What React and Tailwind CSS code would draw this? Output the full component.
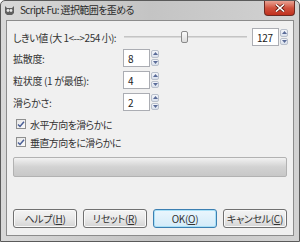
import React from 'react';

const jp = "font-['Noto_Sans_CJK_JP','Noto_Sans',sans-serif] [font-feature-settings:'palt'] tracking-[-0.3px]";

const SpinArrow = ({ up }) => (
  <div className="flex-1 flex items-center justify-center rounded-[2px] border border-[#b9c0cc] bg-gradient-to-b from-[#f4f6fa] to-[#d9e0ec]">
    <svg width="5" height="3" viewBox="0 0 5 3">
      {up ? <path d="M0 3 L2.5 0 L5 3 Z" fill="#5a6b98" /> : <path d="M0 0 L2.5 3 L5 0 Z" fill="#5a6b98" />}
    </svg>
  </div>
);

const Spin = ({ value }) => (
  <div className="flex h-[18px]">
    <div className="w-[27px] h-full border border-[#abadb3] bg-white pl-[4px] flex items-center text-[10px] text-[#222]">{value}</div>
    <div className="ml-[1px] w-[8px] flex flex-col gap-[1px] py-[1px]">
      <SpinArrow up />
      <SpinArrow />
    </div>
  </div>
);

const Check = ({ label }) => (
  <div className="h-[18px] flex items-center">
    <div className="ml-[3px] w-[10px] h-[10px] border border-[#8e8f8f] bg-gradient-to-br from-[#e6e6e6] to-[#fbfbfb] flex items-center justify-center">
      <svg width="8" height="7" viewBox="0 0 8 7">
        <path d="M1 3.5 L3 5.5 L7 0.8" stroke="#4a5f97" strokeWidth="1.5" fill="none" />
      </svg>
    </div>
    <span className="ml-[4px] text-[10px] text-[#333] tracking-[-0.6px]">{label}</span>
  </div>
);

const Btn = ({ text, mnem, def }) => (
  <div
    className={
      def
        ? 'w-[64px] h-[19px] rounded-[3px] border border-[#3c7fb1] bg-gradient-to-b from-[#eaf6fd] to-[#d3ebf9] flex items-center justify-center text-[10px] text-[#333] shadow-[inset_0_0_0_1px_#a8e0f7]'
        : 'w-[64px] h-[19px] rounded-[3px] border border-[#707070] bg-gradient-to-b from-[#f4f4f4] via-[#e9e9e9] to-[#d4d4d4] flex items-center justify-center text-[10px] text-[#333] shadow-[inset_0_0_0_1px_#fafafa]'
    }
  >
    {text}(<span className="underline">{mnem}</span>)
  </div>
);

const Row = ({ label, value }) => (
  <div className="flex items-center">
    <div className="w-[110px] text-[10px] text-[#333]">{label}</div>
    <Spin value={value} />
  </div>
);

export default function App() {
  return (
    <div className={`${jp} w-[300px] h-[242px] flex flex-col border border-[#5a5a5a] bg-gradient-to-r from-[#d8d8d8] via-[#c4c4c4] to-[#d2d2d2] rounded-t-[5px] overflow-hidden`}>
      <div className="h-[19px] flex items-start">
        <svg width="11" height="10" viewBox="0 0 11 10" className="ml-[3px] mt-[4px]">
          <path d="M1 1 L3 3 L8 3 L10 1 L10 8 L8 10 L3 10 L1 8 Z" fill="#5f5f5f" />
          <circle cx="4" cy="5.5" r="1.4" fill="#e8e8e8" />
          <circle cx="7" cy="5.5" r="1.4" fill="#e8e8e8" />
        </svg>
        <span className="ml-[5px] mt-[2px] text-[10px] text-[#2a2a2a] leading-[14px] tracking-[-0.6px]">Script-Fu: 選択範囲を歪める</span>
        <div className="ml-auto mr-[4px] w-[31px] h-[15px] rounded-b-[4px] border border-t-0 border-[#6d2a22] bg-gradient-to-b from-[#e8a294] via-[#d0513d] to-[#c0301e] flex items-center justify-center">
          <svg width="10" height="8" viewBox="0 0 10 8">
            <path d="M1 0.5 L9 7.5 M9 0.5 L1 7.5" stroke="#5a1a10" strokeWidth="3" />
            <path d="M1 0.5 L9 7.5 M9 0.5 L1 7.5" stroke="#ffffff" strokeWidth="1.6" />
          </svg>
        </div>
      </div>
      <div className="flex-1 mx-[5px] mb-[5px] border border-[#8c8c8c] bg-[#f0f0f0] pl-[6px] pr-[5px] pt-[7px] flex flex-col">
        <div className="flex items-center">
          <div className="text-[10px] text-[#333] whitespace-nowrap tracking-[-0.5px]">しきい値 (大 1&lt;--&gt;254 小):</div>
          <div className="flex-1 relative h-[18px] ml-[8px] mr-[5px] flex items-center">
            <div className="w-full h-[2px] bg-[#d8d8d8] border-t border-[#c4c4c4]" />
            <div className="absolute left-[46%] top-[3px] w-[7px] h-[12px] rounded-[2px] border border-[#8a8a8a] bg-gradient-to-b from-[#fbfbfb] to-[#dcdcdc]" />
          </div>
          <Spin value="127" />
        </div>
        <div className="mt-[3px]"><Row label="拡散度:" value="8" /></div>
        <div className="mt-[4px]"><Row label="粒状度 (1 が最低):" value="4" /></div>
        <div className="mt-[4px]"><Row label="滑らかさ:" value="2" /></div>
        <div className="mt-[4px]"><Check label="水平方向を滑らかに" /></div>
        <Check label="垂直方向をに滑らかに" />
        <div className="mt-[6px] h-[20px] mr-[1px] rounded-[2px] border border-[#b2b2b2] bg-gradient-to-b from-[#f2f2f2] via-[#d2d2d2] to-[#c8c8c8]" />
        <div className="mt-[32px] flex justify-between mr-[1px]">
          <Btn text="ヘルプ" mnem="H" />
          <Btn text="リセット" mnem="R" />
          <Btn text="OK" mnem="O" def />
          <Btn text="キャンセル" mnem="C" />
        </div>
      </div>
    </div>
  );
}
